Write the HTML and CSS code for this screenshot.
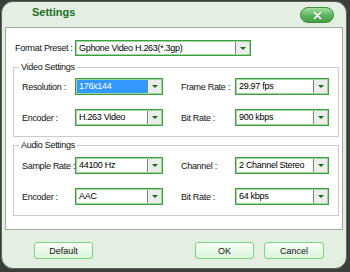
FILE: index.html
```html
<!DOCTYPE html>
<html lang="en">
<head>
    <meta charset="UTF-8">
    <title>Settings</title>
    <link rel="stylesheet" href="styles.css">
</head>
<body>
<div class="dialog">
    <div class="titlebar">
        <span class="title">Settings</span>
        <button class="close" title="Close">
            <svg width="9" height="9" viewBox="0 0 9 9"><path d="M1.5 1.5 L7.5 7.5 M7.5 1.5 L1.5 7.5" stroke="#fff" stroke-width="1.7" stroke-linecap="round"/></svg>
        </button>
    </div>
    <div class="panel">
        <div class="preset-row">
            <span class="label preset-label">Format Preset :</span>
            <div class="select preset-select"><span class="value">Gphone Video H.263(*.3gp)</span><span class="arrow"></span></div>
        </div>
        <fieldset class="group video">
            <legend>Video Settings</legend>
            <div class="row">
                <span class="label">Resolution :</span>
                <div class="select narrow"><span class="value selected">176x144</span><span class="arrow"></span></div>
                <span class="label second">Frame Rate :</span>
                <div class="select wide"><span class="value">29.97 fps</span><span class="arrow"></span></div>
            </div>
            <div class="row">
                <span class="label">Encoder :</span>
                <div class="select narrow"><span class="value">H.263 Video</span><span class="arrow"></span></div>
                <span class="label second">Bit Rate :</span>
                <div class="select wide"><span class="value">900 kbps</span><span class="arrow"></span></div>
            </div>
        </fieldset>
        <fieldset class="group audio">
            <legend>Audio Settings</legend>
            <div class="row">
                <span class="label">Sample Rate :</span>
                <div class="select narrow"><span class="value">44100 Hz</span><span class="arrow"></span></div>
                <span class="label second">Channel :</span>
                <div class="select wide"><span class="value">2 Channel Stereo</span><span class="arrow"></span></div>
            </div>
            <div class="row">
                <span class="label">Encoder :</span>
                <div class="select narrow"><span class="value">AAC</span><span class="arrow"></span></div>
                <span class="label second">Bit Rate :</span>
                <div class="select wide"><span class="value">64 kbps</span><span class="arrow"></span></div>
            </div>
        </fieldset>
    </div>
    <div class="footer">
        <button class="btn">Default</button>
        <button class="btn ok">OK</button>
        <button class="btn cancel">Cancel</button>
    </div>
</div>
</body>
</html>
```

FILE: styles.css
```css
body { margin: 0; padding: 1px 0 0 1px; background: #3b3f3b; font-family: "Liberation Sans", Arial, sans-serif; font-size: 9px; letter-spacing: -0.3px; }
.dialog { width: 346px; height: 268px; box-sizing: border-box; border: 1px solid #5b665b; border-radius: 12px; background: #e5eee3; display: flex; flex-direction: column; overflow: hidden; }
.titlebar { height: 25px; display: flex; align-items: flex-start; justify-content: space-between; padding-left: 30px; }
.title { margin-top: 4px; font-weight: bold; font-size: 11px; line-height: 13px; letter-spacing: 0; color: #1f6e1f; }
.close {
    margin: 5px 12px 0 0;
    width: 34px;
    height: 16px;
    padding: 0;
    border: 1px solid #3d8f3d;
    border-radius: 8px;
    background: linear-gradient(#a5dda5, #5cb35c 55%, #479f47);
    display: flex;
    align-items: center;
    justify-content: center;
}
.panel { margin: 0 3px 0 3px; height: 203px; box-sizing: border-box; background: #fff; border: 1px solid #a3aaa3; padding: 12px 3px 0 7px; }
.preset-row { display: flex; align-items: center; height: 16px; padding-left: 2px; }
.label { width: 53px; color: #111; line-height: 12px; white-space: nowrap; }
.preset-label { width: 60px; }
.second { margin-left: 18px; width: 54px; }
.select { display: flex; box-sizing: border-box; height: 17px; border: 1px solid #3e9e3e; box-shadow: inset 0 0 0 1px #9fd69f; background: #fff; }
.preset-select { width: 176px; height: 16px; }
.narrow { width: 88px; }
.wide { width: 94px; }
.value { flex: 1; padding-left: 3px; line-height: 15px; color: #000; white-space: nowrap; overflow: hidden; }
.selected { margin: 1px 0 1px 1px; padding-left: 2px; line-height: 13px; background: #3399ff; color: #fff; }
.arrow { width: 13px; flex: none; background: #ececec; border-left: 1px solid #6f8f6f; margin: 1px 1px 1px 0; position: relative; }
.arrow::after { content: ""; position: absolute; left: 4px; top: 5px; border-left: 3px solid transparent; border-right: 3px solid transparent; border-top: 3px solid #1d6a1d; }
.group { margin: 5px 0 0 0; padding: 5px 8px 10px 8px; border: 1px solid #cbcbcb; min-width: 0; }
.group legend { padding: 0 2px; margin-left: -3px; line-height: 12px; color: #111; }
.audio { margin-top: 2px; padding-top: 6px; }
.row { display: flex; align-items: center; height: 17px; }
.row + .row { margin-top: 14px; }
.footer { display: flex; padding: 12px 22px 0 32px; }
.btn {
    width: 59px;
    height: 17px;
    padding: 0;
    border: 1px solid #79d679;
    border-radius: 3px;
    background: linear-gradient(#f6fff6, #dcf3dc);
    font: inherit;
    color: #111;
}
.ok { margin-left: auto; }
.cancel { margin-left: 10px; width: 60px; }
```
